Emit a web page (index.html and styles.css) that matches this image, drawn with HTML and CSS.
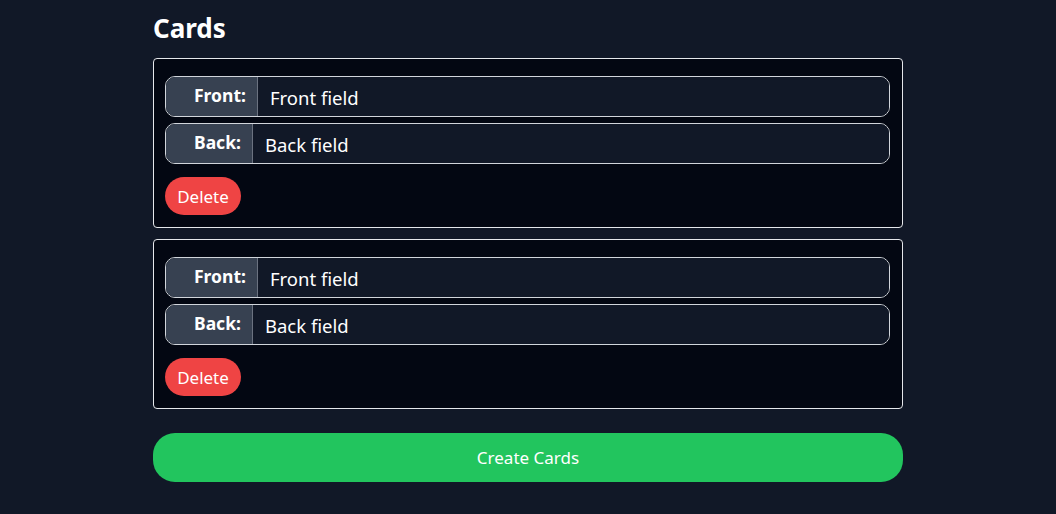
FILE: index.html
```html
<!DOCTYPE html>
<html>
<head>
<meta charset="utf-8">
<link rel="stylesheet" href="styles.css">
</head>
<body>
<main class="page">
  <h2 class="title">Cards</h2>
  <div class="card-list">
    <div class="card">
      <div class="field">
        <label class="field-label">Front:</label>
        <input class="field-input" type="text" value="Front field">
      </div>
      <div class="field">
        <label class="field-label">Back:</label>
        <input class="field-input" type="text" value="Back field">
      </div>
      <button class="btn-delete">Delete</button>
    </div>
    <div class="card">
      <div class="field">
        <label class="field-label">Front:</label>
        <input class="field-input" type="text" value="Front field">
      </div>
      <div class="field">
        <label class="field-label">Back:</label>
        <input class="field-input" type="text" value="Back field">
      </div>
      <button class="btn-delete">Delete</button>
    </div>
  </div>
  <button class="btn-create">Create Cards</button>
</main>
</body>
</html>
```

FILE: styles.css
```css
* { box-sizing: border-box; }
body {
  margin: 0;
  background: #111827;
  color: #fff;
  font-family: "Noto Sans", "Open Sans", sans-serif;
}
.page {
  width: 750px;
  margin: 0 auto;
  padding-top: 12px;
}
.title {
  margin: 0 0 14px;
  font-size: 26px;
  line-height: 32px;
  font-weight: 700;
}
.card-list {
  display: flex;
  flex-direction: column;
  gap: 11px;
}
.card {
  display: flex;
  flex-direction: column;
  align-items: flex-start;
  gap: 6px;
  background: #030712;
  border: 1px solid #e5e7eb;
  border-radius: 4px;
  padding: 17px 12px 12px 11px;
}
.field {
  display: flex;
  width: 100%;
  height: 41px;
  border: 1px solid #d1d5db;
  border-radius: 10px;
  overflow: hidden;
}
.field-label {
  background: #374151;
  border-right: 1px solid #6b7280;
  font-weight: 700;
  font-size: 17.5px;
  line-height: 24px;
  padding: 6px 11px 0 28px;
}
.field-input {
  flex: 1;
  min-width: 0;
  background: #111827;
  border: none;
  outline: none;
  color: #fff;
  font-family: inherit;
  font-size: 18.5px;
  padding: 1px 12px 0;
}
.btn-delete {
  margin-top: 7px;
  height: 38px;
  width: 76px;
  border: none;
  border-radius: 19px;
  background: #ef4444;
  color: #fff;
  font-family: inherit;
  font-size: 17px;
  padding: 0;
}
.btn-create {
  display: block;
  width: 100%;
  margin-top: 24px;
  height: 49px;
  border: none;
  border-radius: 22px;
  background: #22c55e;
  color: #fff;
  font-family: inherit;
  font-size: 17px;
}
```
